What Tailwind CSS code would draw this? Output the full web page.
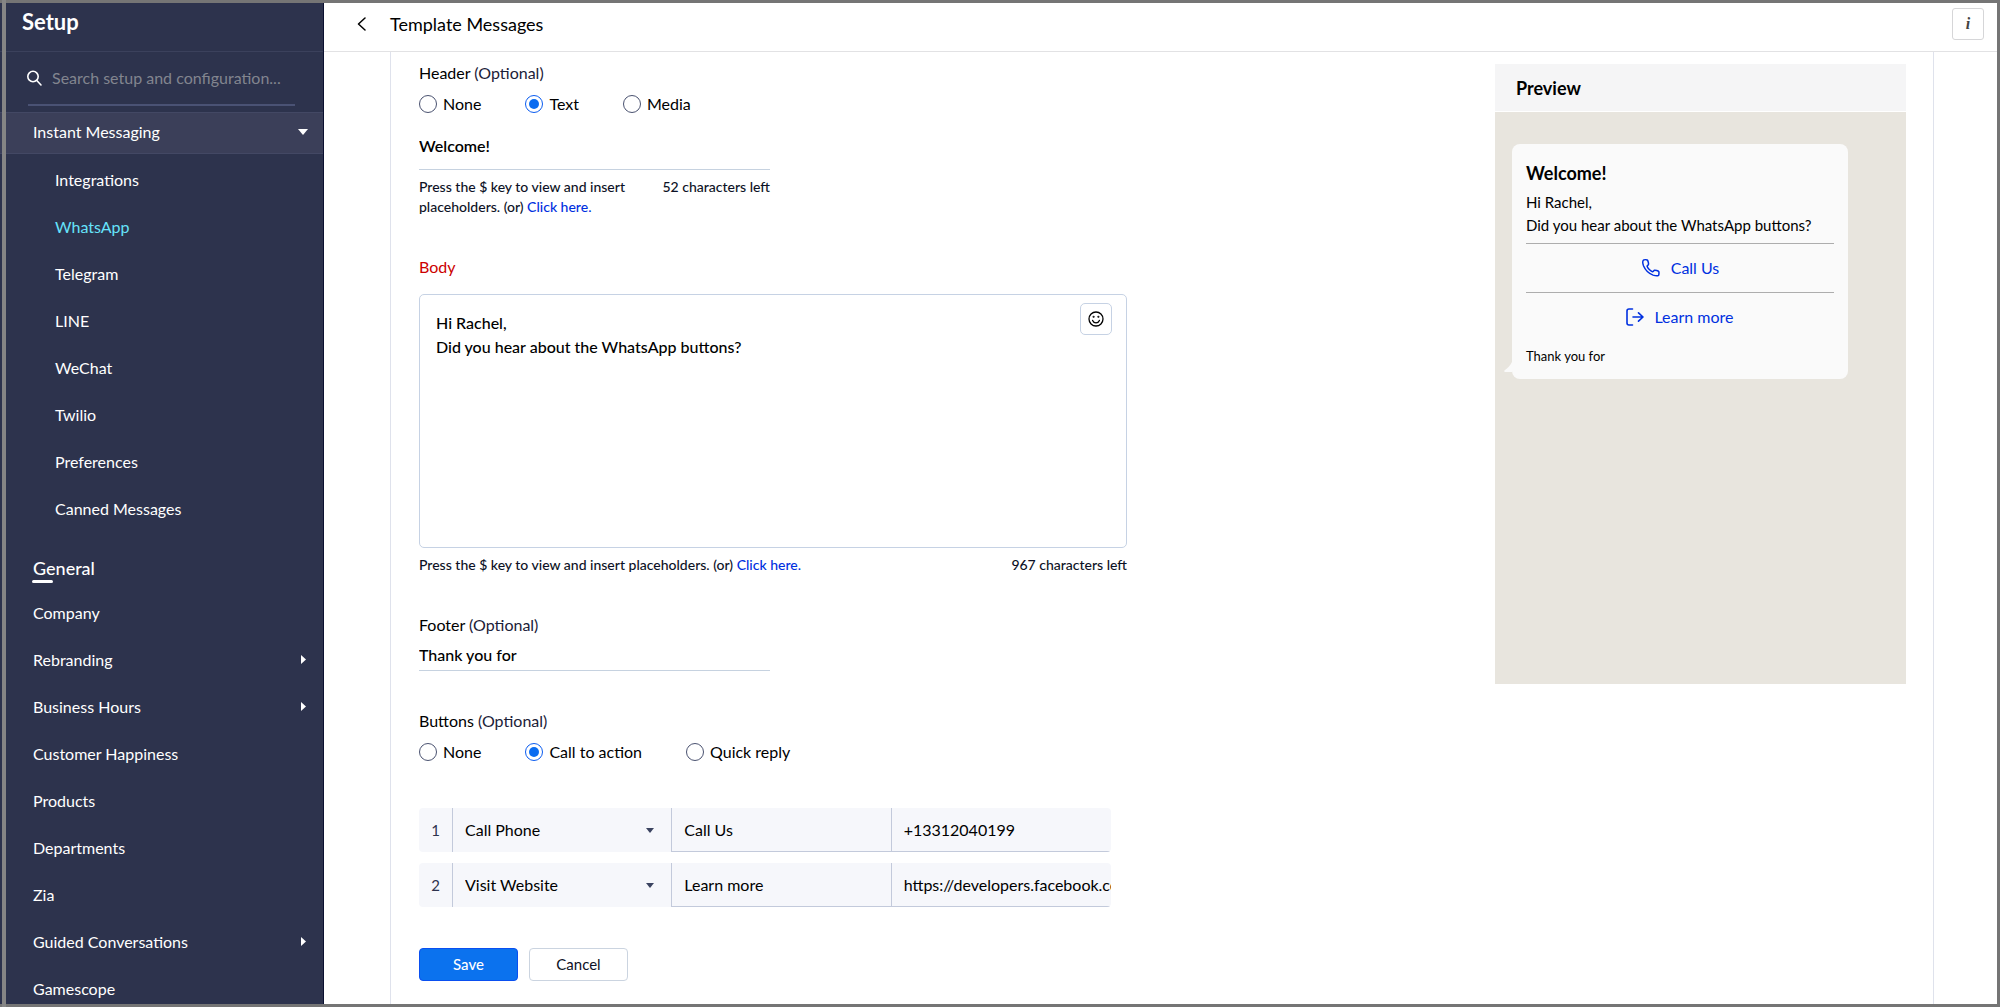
<!DOCTYPE html>
<html lang="en">
<head>
    <meta charset="UTF-8">
    <meta name="viewport" content="width=device-width, initial-scale=1.0">
    <title>Setup - Template Messages</title>
    <script src="https://cdn.jsdelivr.net/npm/@tailwindcss/browser@4"></script>
</head>
<body class="h-screen overflow-hidden bg-white font-['Lato',sans-serif] text-base text-black">
    <div class="flex h-full">
        <!-- Sidebar -->
        <aside class="flex w-[324px] shrink-0 flex-col overflow-hidden border-r border-[#0b1030] bg-[#2d334d] text-white">
            <div class="h-[52px] shrink-0 border-b border-[#3b415c] pt-2 pl-[22px]">
                <h1 class="text-[22px] leading-7 font-bold">Setup</h1>
            </div>
            <div class="mr-7 ml-7 flex h-[54px] shrink-0 items-center gap-2 border-b-2 border-[#4a5274]">
                <svg class="-ml-1 size-5 shrink-0" viewBox="0 0 20 20" fill="none" stroke="currentColor" stroke-width="1.6" stroke-linecap="round">
                    <circle cx="9" cy="8.5" r="5.2"/>
                    <path d="M12.8 12.500 17 17"/>
                </svg>
                <input type="text" aria-label="Search setup" placeholder="Search setup and configuration..." class="w-full min-w-0 bg-transparent outline-none placeholder:text-[#82858f]">
            </div>
            <nav class="mt-[6px]">
                <a href="#" class="mb-0.5 flex h-[42px] items-center justify-between border-y border-[#434864] bg-[#3b3f59] pr-[15px] pb-0.5 pl-[33px]">
                    Instant Messaging
                    <svg class="h-[6px] w-[10px]" viewBox="0 0 10 6" fill="currentColor"><path d="M0 0h10L5 6z"/></svg>
                </a>
                <a href="#" class="flex h-[47px] items-center pl-[55px]">Integrations</a>
                <a href="#" class="flex h-[47px] items-center pl-[55px] text-[#66e3fb]">WhatsApp</a>
                <a href="#" class="flex h-[47px] items-center pl-[55px]">Telegram</a>
                <a href="#" class="flex h-[47px] items-center pl-[55px]">LINE</a>
                <a href="#" class="flex h-[47px] items-center pl-[55px]">WeChat</a>
                <a href="#" class="flex h-[47px] items-center pl-[55px]">Twilio</a>
                <a href="#" class="flex h-[47px] items-center pl-[55px]">Preferences</a>
                <a href="#" class="flex h-[47px] items-center pl-[55px]">Canned Messages</a>
            </nav>
            <h2 class="mt-6 pl-[33px] text-lg leading-6 font-medium">General</h2>
            <div class="ml-8 h-[3px] w-[21px] shrink-0 rounded bg-white"></div>
            <nav class="mt-[6px]">
                <a href="#" class="flex h-[47px] items-center pl-[33px]">Company</a>
                <a href="#" class="flex h-[47px] items-center justify-between pr-[17px] pl-[33px]">
                    Rebranding
                    <svg class="h-[9px] w-[6px]" viewBox="0 0 6 9" fill="currentColor"><path d="M1 0v9l5-4.5z"/></svg>
                </a>
                <a href="#" class="flex h-[47px] items-center justify-between pr-[17px] pl-[33px]">
                    Business Hours
                    <svg class="h-[9px] w-[6px]" viewBox="0 0 6 9" fill="currentColor"><path d="M1 0v9l5-4.5z"/></svg>
                </a>
                <a href="#" class="flex h-[47px] items-center pl-[33px]">Customer Happiness</a>
                <a href="#" class="flex h-[47px] items-center pl-[33px]">Products</a>
                <a href="#" class="flex h-[47px] items-center pl-[33px]">Departments</a>
                <a href="#" class="flex h-[47px] items-center pl-[33px]">Zia</a>
                <a href="#" class="flex h-[47px] items-center justify-between pr-[17px] pl-[33px]">
                    Guided Conversations
                    <svg class="h-[9px] w-[6px]" viewBox="0 0 6 9" fill="currentColor"><path d="M1 0v9l5-4.5z"/></svg>
                </a>
                <a href="#" class="flex h-[47px] items-center pl-[33px]">Gamescope</a>
            </nav>
        </aside>

        <!-- Main -->
        <main class="flex min-w-0 flex-1 flex-col">
            <header class="flex h-[52px] shrink-0 items-center border-b border-[#e2e2e4] pr-4 pb-[3px] pl-[33px]">
                <button type="button" aria-label="Back" class="mr-6">
                    <svg class="h-[14px] w-[9px]" viewBox="0 0 9 14" fill="none" stroke="currentColor" stroke-width="1.5" stroke-linecap="round" stroke-linejoin="round"><path d="M8 1 1.5 7 8 13"/></svg>
                </button>
                <h2 class="flex-1 text-lg leading-6">Template Messages</h2>
                <button type="button" aria-label="Information" class="size-8 rounded-[3px] border border-[#d6d6d8] font-['Liberation_Serif',serif] text-base font-bold text-[#444] italic">i</button>
            </header>

            <div class="mx-[66px] flex min-h-0 flex-1 items-start justify-between border-x border-[#dfe2ec] pt-3 pr-[27px] pl-7">
                <form class="w-[708px]">
                    <!-- Header -->
                    <fieldset>
                        <legend class="leading-[18px]">Header <span class="text-[#1b2138]">(Optional)</span></legend>
                        <div class="mt-[10px] flex h-6 items-center gap-11">
                            <label class="flex items-center gap-[6px]"><input type="radio" name="header" class="grid size-[18px] appearance-none place-content-center rounded-full border border-[#4a5270] before:size-[10px] before:rounded-full checked:border-[#0b5cf0] checked:before:bg-[#0a6cf0]">None</label>
                            <label class="flex items-center gap-[6px]"><input type="radio" name="header" checked class="grid size-[18px] appearance-none place-content-center rounded-full border border-[#4a5270] before:size-[10px] before:rounded-full checked:border-[#0b5cf0] checked:before:bg-[#0a6cf0]">Text</label>
                            <label class="flex items-center gap-[6px]"><input type="radio" name="header" class="grid size-[18px] appearance-none place-content-center rounded-full border border-[#4a5270] before:size-[10px] before:rounded-full checked:border-[#0b5cf0] checked:before:bg-[#0a6cf0]">Media</label>
                        </div>
                    </fieldset>
                    <div class="mt-2 w-[351px]">
                        <input type="text" aria-label="Header text" value="Welcome!" class="block h-[46px] w-full border-b border-[#c6d2e0] pb-0.5 font-semibold outline-none">
                        <div class="mt-[7px] flex items-start justify-between text-sm leading-5 font-medium text-[#0d1226]">
                            <p class="w-[226px]">Press the $ key to view and insert placeholders. (or) <a href="#" class="text-[#0030e0]">Click here.</a></p>
                            <span class="shrink-0">52 characters left</span>
                        </div>
                    </div>

                    <!-- Body -->
                    <label for="body-text" class="mt-10 block leading-5 text-[#cc0000]">Body</label>
                    <div class="relative mt-[17px]">
                        <textarea id="body-text" class="block h-[254px] w-full resize-none rounded-[5px] border border-[#c6d2e4] px-4 pt-4 leading-6 font-medium outline-none">Hi Rachel,
Did you hear about the WhatsApp buttons?</textarea>
                        <button type="button" aria-label="Insert emoji" class="absolute top-[9px] right-[15px] grid size-8 place-content-center rounded-[5px] border border-[#c6d2e4] bg-white">
                            <svg class="size-4" viewBox="0 0 16 16" fill="none" stroke="currentColor" stroke-width="1.3" stroke-linecap="round">
                                <circle cx="8" cy="8" r="7"/>
                                <path d="M4.6 9.4c.6 1.5 1.9 2.4 3.4 2.4s2.800-.9 3.400-2.400"/>
                                <circle cx="5.600" cy="5.800" r=".4" fill="currentColor"/>
                                <circle cx="10.400" cy="5.800" r=".4" fill="currentColor"/>
                            </svg>
                        </button>
                    </div>
                    <div class="mt-[7px] flex justify-between text-sm leading-5 font-medium text-[#0d1226]">
                        <p>Press the $ key to view and insert placeholders. (or) <a href="#" class="text-[#0030e0]">Click here.</a></p>
                        <span>967 characters left</span>
                    </div>

                    <!-- Footer -->
                    <label for="footer-text" class="mt-10 block leading-5">Footer <span class="text-[#1b2138]">(Optional)</span></label>
                    <input id="footer-text" type="text" value="Thank you for" class="mt-1 block h-8 w-[351px] border-b border-[#c6d2e0] font-medium outline-none">

                    <!-- Buttons -->
                    <fieldset class="mt-[41px]">
                        <legend class="leading-[18px]">Buttons <span class="text-[#1b2138]">(Optional)</span></legend>
                        <div class="mt-[10px] flex h-6 items-center gap-11">
                            <label class="flex items-center gap-[6px]"><input type="radio" name="buttons" class="grid size-[18px] appearance-none place-content-center rounded-full border border-[#4a5270] before:size-[10px] before:rounded-full checked:border-[#0b5cf0] checked:before:bg-[#0a6cf0]">None</label>
                            <label class="flex items-center gap-[6px]"><input type="radio" name="buttons" checked class="grid size-[18px] appearance-none place-content-center rounded-full border border-[#4a5270] before:size-[10px] before:rounded-full checked:border-[#0b5cf0] checked:before:bg-[#0a6cf0]">Call to action</label>
                            <label class="flex items-center gap-[6px]"><input type="radio" name="buttons" class="grid size-[18px] appearance-none place-content-center rounded-full border border-[#4a5270] before:size-[10px] before:rounded-full checked:border-[#0b5cf0] checked:before:bg-[#0a6cf0]">Quick reply</label>
                        </div>
                    </fieldset>
                    <div class="mt-11 flex w-[692px] flex-col gap-[11px]">
                        <div class="grid h-11 grid-cols-[34px_1fr_1fr_1fr] overflow-hidden rounded-[4px] bg-[#f6f7fb]">
                            <span class="grid place-content-center border-r border-[#c3cadb] text-[15px] text-[#2d334d]">1</span>
                            <div class="relative">
                                <select aria-label="Type of button 1" class="size-full appearance-none border-r border-[#c3cadb] pl-3 outline-none"><option>Call Phone</option><option>Visit Website</option></select>
                                <svg class="pointer-events-none absolute top-5 right-[18px] h-[5px] w-2" viewBox="0 0 8 5" fill="#3b4360"><path d="M0 0h8L4 5z"/></svg>
                            </div>
                            <input type="text" aria-label="Label of button 1" value="Call Us" class="min-w-0 border-r border-b border-[#c3cadb] px-3 outline-none">
                            <input type="text" aria-label="Phone number" value="+13312040199" class="min-w-0 border-b border-[#c3cadb] pl-3 outline-none">
                        </div>
                        <div class="grid h-11 grid-cols-[34px_1fr_1fr_1fr] overflow-hidden rounded-[4px] bg-[#f6f7fb]">
                            <span class="grid place-content-center border-r border-[#c3cadb] text-[15px] text-[#2d334d]">2</span>
                            <div class="relative">
                                <select aria-label="Type of button 2" class="size-full appearance-none border-r border-[#c3cadb] pl-3 outline-none"><option>Visit Website</option><option>Call Phone</option></select>
                                <svg class="pointer-events-none absolute top-5 right-[18px] h-[5px] w-2" viewBox="0 0 8 5" fill="#3b4360"><path d="M0 0h8L4 5z"/></svg>
                            </div>
                            <input type="text" aria-label="Label of button 2" value="Learn more" class="min-w-0 border-r border-b border-[#c3cadb] px-3 outline-none">
                            <input type="text" aria-label="Website address" value="https://developers.facebook.com" class="min-w-0 border-b border-[#c3cadb] pl-3 outline-none">
                        </div>
                    </div>

                    <div class="mt-[41px] flex gap-[11px] text-[15px]">
                        <button type="submit" class="h-[33px] w-[99px] rounded-[4px] border border-[#0a4ff0] bg-[#0b72ee] font-medium text-white">Save</button>
                        <button type="button" class="h-[33px] w-[99px] rounded-[4px] border border-[#cbd4e0] text-[#0d1226]">Cancel</button>
                    </div>
                </form>

                <!-- Preview -->
                <section class="flex min-h-[620px] w-[411px] flex-col bg-[#e8e5de]">
                    <h3 class="flex h-12 items-center border-b border-white bg-[#f5f5f6] pl-[21px] text-lg font-bold">Preview</h3>
                    <div class="relative mt-8 ml-[17px] w-[336px] rounded-lg bg-[#fafafa] px-[14px] pt-[17px]">
                        <svg class="absolute bottom-[7px] -left-2 h-[10px] w-2" viewBox="0 0 8 10" fill="#fafafa"><path d="M8 0v10H1.500C0 10-.2 8.800 1 8c2.600-1.600 5.200-4.600 7-8z"/></svg>
                        <h4 class="text-lg leading-6 font-bold">Welcome!</h4>
                        <p class="mt-[6px] text-[15px] leading-[23px]">Hi Rachel,<br>Did you hear about the WhatsApp buttons?</p>
                        <a href="#" class="mt-[6px] flex h-[49px] items-center justify-center gap-[10px] border-t border-[#adadad] text-[#0030e0]">
                            <svg class="size-5" viewBox="0 0 20 20" fill="none" stroke="currentColor" stroke-width="1.500" stroke-linejoin="round"><path d="M2.400 2.200c.5-.4 3-.5 3.800-.2.800.5 1.500 3.500 1.300 4.300-.2.900-1.500 1.300-1.400 2 .6 2 3.400 4.800 5.400 5.400.8.200 1.200-1.200 2-1.400.9-.2 3.700.5 4.300 1.300.3.800.2 3.300-.3 3.800-.8.600-3.600.3-5.400-.3C7.400 15.400 4.400 12.200 2.600 8c-.7-1.900-1-5-.2-5.800z"/></svg>
                            Call Us
                        </a>
                        <a href="#" class="flex h-[49px] items-center justify-center gap-[10px] border-t border-[#adadad] text-[#0030e0]">
                            <svg class="size-[18px]" viewBox="0 0 18 18" fill="none" stroke="currentColor" stroke-width="1.600" stroke-linecap="round" stroke-linejoin="round"><path d="M6.500 1H3a2 2 0 0 0-2 2v12a2 2 0 0 0 2 2h3.500M7 9h10M12.500 4.800 17 9l-4.500 4.200"/></svg>
                            Learn more
                        </a>
                        <p class="mt-[5px] pb-[13px] text-[13px] leading-5">Thank you for</p>
                    </div>
                </section>
            </div>
        </main>
    </div>

    <!-- Window frame -->
    <div class="pointer-events-none fixed inset-0 border-t-3 border-r-3 border-b-3 border-[#757575]"></div>
    <div class="pointer-events-none fixed top-0 bottom-0 left-0.5 w-1 bg-[#858585]"></div>
</body>
</html>
